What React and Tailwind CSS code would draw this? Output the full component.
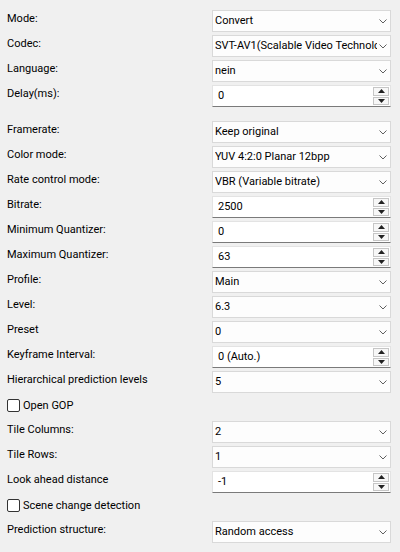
import React from "react";

const rowsA = [
  { label: "Mode:", type: "combo", value: "Convert" },
  { label: "Codec:", type: "combo", value: "SVT-AV1(Scalable Video Technology for AV1)" },
  { label: "Language:", type: "combo", value: "nein" },
  { label: "Delay(ms):", type: "spin", value: "0" },
];

const rowsB = [
  { label: "Framerate:", type: "combo", value: "Keep original" },
  { label: "Color mode:", type: "combo", value: "YUV 4:2:0 Planar 12bpp" },
  { label: "Rate control mode:", type: "combo", value: "VBR (Variable bitrate)" },
  { label: "Bitrate:", type: "spin", value: "2500" },
  { label: "Minimum Quantizer:", type: "spin", value: "0" },
  { label: "Maximum Quantizer:", type: "spin", value: "63" },
  { label: "Profile:", type: "combo", value: "Main" },
  { label: "Level:", type: "combo", value: "6.3" },
  { label: "Preset", type: "combo", value: "0" },
  { label: "Keyframe Interval:", type: "spin", value: "0 (Auto.)" },
  { label: "Hierarchical prediction levels", type: "combo", value: "5" },
  { label: "Open GOP", type: "check" },
  { label: "Tile Columns:", type: "combo", value: "2" },
  { label: "Tile Rows:", type: "combo", value: "1" },
  { label: "Look ahead distance", type: "spin", value: "-1" },
  { label: "Scene change detection", type: "check" },
  { label: "Prediction structure:", type: "combo", value: "Random access" },
];

function Chevron() {
  return (
    <svg width="8" height="5" viewBox="0 0 8 5" className="shrink-0">
      <polyline points="0.5,0.5 4,4 7.5,0.5" fill="none" stroke="#606060" strokeWidth="1" />
    </svg>
  );
}

function Combo({ value }) {
  return (
    <div className="w-[179px] h-[22px] border border-[#d9d9d9] bg-[#fdfdfd] flex items-center pl-[2px] pr-[3px]">
      <span className="flex-1 overflow-hidden whitespace-nowrap mr-[2px]">{value}</span>
      <Chevron />
    </div>
  );
}

function Spin({ value }) {
  return (
    <div className="w-[179px] h-[22px] border border-[#e3e3e3] border-b-[#7a7a7a] bg-white flex items-center pl-[5px] pr-[1px]">
      <span className="flex-1 whitespace-nowrap">{value}</span>
      <div className="w-[16px] h-[18px] flex flex-col gap-[1px]">
        <div className="flex-1 border border-[#c6c6c6] bg-[#f7f7f7] flex items-center justify-center">
          <svg width="7" height="4" viewBox="0 0 7 4">
            <polygon points="0,4 3.5,0 7,4" fill="#222" />
          </svg>
        </div>
        <div className="flex-1 border border-[#c6c6c6] bg-[#f7f7f7] flex items-center justify-center">
          <svg width="7" height="4" viewBox="0 0 7 4">
            <polygon points="0,0 3.5,4 7,0" fill="#222" />
          </svg>
        </div>
      </div>
    </div>
  );
}

function Row({ row }) {
  if (row.type === "check") {
    return (
      <div className="h-[22px] flex items-start pt-[2px]">
        <div className="w-[13px] h-[13px] border border-[#333] bg-white rounded-[2px] mt-[1px]" />
        <span className="ml-[3px] leading-[16px]">{row.label}</span>
      </div>
    );
  }
  return (
    <div className="h-[22px] flex">
      <div className="w-[205px] leading-[16px] pt-[1px] whitespace-nowrap">{row.label}</div>
      {row.type === "combo" ? <Combo value={row.value} /> : <Spin value={row.value} />}
    </div>
  );
}

export default function App() {
  return (
    <div className="w-[400px] h-[552px] bg-[#f0f0f0] text-black text-[11px] font-['Roboto',sans-serif] pt-[10px] pl-[7px] pr-[9px] overflow-hidden">
      <div className="flex flex-col gap-[3px]">
        {rowsA.map((r) => (
          <Row key={r.label} row={r} />
        ))}
        <div className="h-[8px]" />
        {rowsB.map((r) => (
          <Row key={r.label} row={r} />
        ))}
      </div>
    </div>
  );
}
